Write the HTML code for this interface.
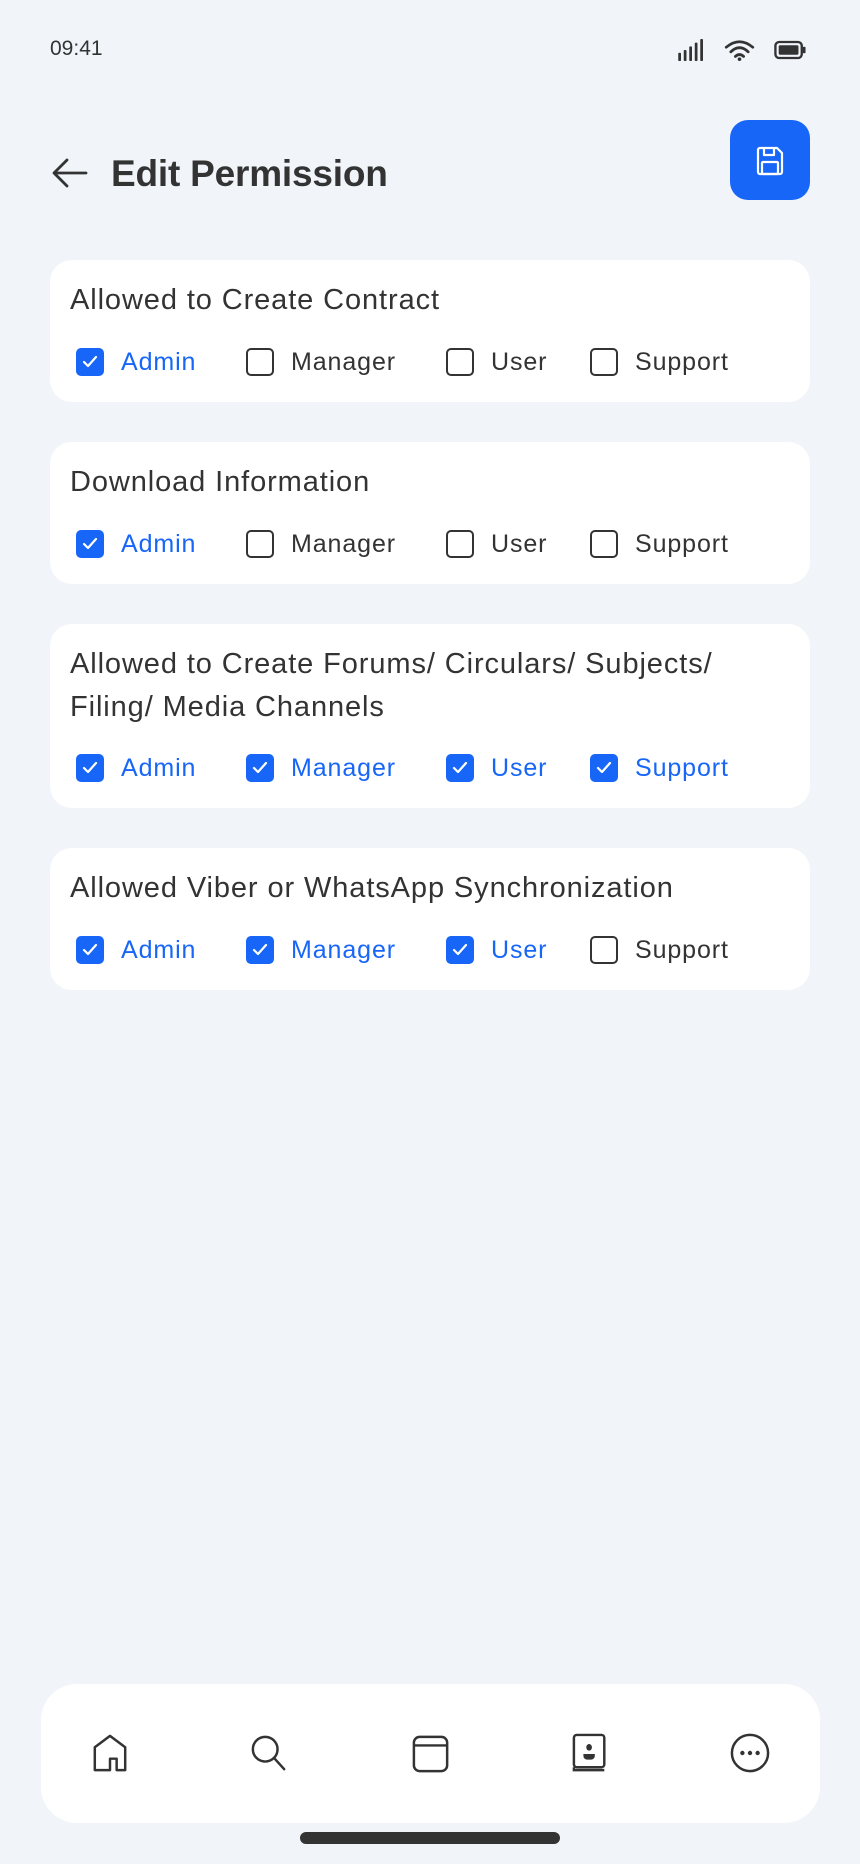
<!DOCTYPE html>
<html><head><meta charset="utf-8"><style>
*{margin:0;padding:0;box-sizing:border-box}
body{width:860px;height:1864px;background:#f1f5fa;font-family:"Liberation Sans",sans-serif;color:#333;position:relative;overflow:hidden}
.abs{position:absolute}
.time{left:50px;top:37px;font-size:21px;color:#333}
.title{left:111px;top:153px;font-size:37px;font-weight:bold;color:#333;letter-spacing:-0.2px}
.save{left:730px;top:120px;width:80px;height:80px;border-radius:18px;background:#1766f7}
.card{left:50px;width:760px;background:#fff;border-radius:22px}
.ct{position:absolute;left:20px;font-size:29px;letter-spacing:0.9px;line-height:43px;color:#333}
.cb{position:absolute;width:28px;height:28px;border-radius:5px;border:2.5px solid #333}
.cb.on{background:#1766f7;border:none}
.cb.on svg{position:absolute;left:6px;top:7px}
.lb{position:absolute;font-size:25px;letter-spacing:0.9px;line-height:28px;color:#333}
.lb.on{color:#1766f7}
.nav{left:41px;top:1684px;width:779px;height:139px;background:#fff;border-radius:36px}
.bar{left:300px;top:1832px;width:260px;height:12px;border-radius:6px;background:#333}
</style></head><body>
<div class="abs time">09:41</div>
<svg class="abs" style="left:678px;top:39px" width="28" height="22" viewBox="0 0 30 24"><g fill="#333"><rect x="0" y="15" width="3" height="9" rx="1"/><rect x="6" y="12" width="3" height="12" rx="1"/><rect x="12" y="8" width="3" height="16" rx="1"/><rect x="18" y="4" width="3" height="20" rx="1"/><rect x="24" y="0" width="3" height="24" rx="1"/></g></svg>
<svg class="abs" style="left:724px;top:39px" width="31" height="22" viewBox="0 0 33 24"><g fill="none" stroke="#333" stroke-width="3" stroke-linecap="round"><path d="M2 9 Q16.5 -3 31 9"/><path d="M7 14 Q16.5 5 26 14"/><path d="M12 19 Q16.5 15 21 19"/></g><circle cx="16.5" cy="22" r="2" fill="#333"/></svg>
<svg class="abs" style="left:774px;top:40px" width="32" height="20" viewBox="0 0 34 20"><rect x="1.5" y="1.5" width="28" height="17" rx="4" fill="none" stroke="#333" stroke-width="2.5"/><rect x="5" y="5" width="21" height="10" rx="1.5" fill="#333"/><rect x="30.5" y="6.5" width="3" height="7" rx="1" fill="#333"/></svg>

<svg class="abs" style="left:52px;top:158px" width="36" height="30" viewBox="0 0 36 30"><g fill="none" stroke="#333" stroke-width="2.8" stroke-linecap="round" stroke-linejoin="round"><path d="M34 15H3"/><path d="M15 2L2 15l13 13"/></g></svg>
<div class="abs title">Edit Permission</div>
<div class="abs save"><svg style="position:absolute;left:26px;top:26px" width="28" height="30" viewBox="0 0 28 30"><g fill="none" stroke="#fff" stroke-width="2.2" stroke-linejoin="round"><path d="M4 2h17l5 5v19a2 2 0 0 1-2 2H4a2 2 0 0 1-2-2V4a2 2 0 0 1 2-2z"/><path d="M8 2v7h10V2"/><rect x="6" y="16" width="16" height="12" rx="1"/></g></svg></div>

<div class="abs card" style="top:260px;height:142px">
<div class="ct" style="top:19px">Allowed to Create Contract</div>
<div class="cb on" style="left:26px;top:88px"><svg width="16" height="14" viewBox="0 0 16 14"><path d="M2 7l4 4 8-9" fill="none" stroke="#fff" stroke-width="2.2" stroke-linecap="round" stroke-linejoin="round"/></svg></div><div class="lb on" style="left:71px;top:88px">Admin</div>
<div class="cb" style="left:196px;top:88px"></div><div class="lb" style="left:241px;top:88px">Manager</div>
<div class="cb" style="left:396px;top:88px"></div><div class="lb" style="left:441px;top:88px">User</div>
<div class="cb" style="left:540px;top:88px"></div><div class="lb" style="left:585px;top:88px">Support</div>
</div>
<div class="abs card" style="top:442px;height:142px">
<div class="ct" style="top:19px">Download Information</div>
<div class="cb on" style="left:26px;top:88px"><svg width="16" height="14" viewBox="0 0 16 14"><path d="M2 7l4 4 8-9" fill="none" stroke="#fff" stroke-width="2.2" stroke-linecap="round" stroke-linejoin="round"/></svg></div><div class="lb on" style="left:71px;top:88px">Admin</div>
<div class="cb" style="left:196px;top:88px"></div><div class="lb" style="left:241px;top:88px">Manager</div>
<div class="cb" style="left:396px;top:88px"></div><div class="lb" style="left:441px;top:88px">User</div>
<div class="cb" style="left:540px;top:88px"></div><div class="lb" style="left:585px;top:88px">Support</div>
</div>
<div class="abs card" style="top:624px;height:184px">
<div class="ct" style="top:19px">Allowed to Create Forums/ Circulars/ Subjects/<br>Filing/ Media Channels</div>
<div class="cb on" style="left:26px;top:130px"><svg width="16" height="14" viewBox="0 0 16 14"><path d="M2 7l4 4 8-9" fill="none" stroke="#fff" stroke-width="2.2" stroke-linecap="round" stroke-linejoin="round"/></svg></div><div class="lb on" style="left:71px;top:130px">Admin</div>
<div class="cb on" style="left:196px;top:130px"><svg width="16" height="14" viewBox="0 0 16 14"><path d="M2 7l4 4 8-9" fill="none" stroke="#fff" stroke-width="2.2" stroke-linecap="round" stroke-linejoin="round"/></svg></div><div class="lb on" style="left:241px;top:130px">Manager</div>
<div class="cb on" style="left:396px;top:130px"><svg width="16" height="14" viewBox="0 0 16 14"><path d="M2 7l4 4 8-9" fill="none" stroke="#fff" stroke-width="2.2" stroke-linecap="round" stroke-linejoin="round"/></svg></div><div class="lb on" style="left:441px;top:130px">User</div>
<div class="cb on" style="left:540px;top:130px"><svg width="16" height="14" viewBox="0 0 16 14"><path d="M2 7l4 4 8-9" fill="none" stroke="#fff" stroke-width="2.2" stroke-linecap="round" stroke-linejoin="round"/></svg></div><div class="lb on" style="left:585px;top:130px">Support</div>
</div>
<div class="abs card" style="top:848px;height:142px">
<div class="ct" style="top:19px">Allowed Viber or WhatsApp Synchronization</div>
<div class="cb on" style="left:26px;top:88px"><svg width="16" height="14" viewBox="0 0 16 14"><path d="M2 7l4 4 8-9" fill="none" stroke="#fff" stroke-width="2.2" stroke-linecap="round" stroke-linejoin="round"/></svg></div><div class="lb on" style="left:71px;top:88px">Admin</div>
<div class="cb on" style="left:196px;top:88px"><svg width="16" height="14" viewBox="0 0 16 14"><path d="M2 7l4 4 8-9" fill="none" stroke="#fff" stroke-width="2.2" stroke-linecap="round" stroke-linejoin="round"/></svg></div><div class="lb on" style="left:241px;top:88px">Manager</div>
<div class="cb on" style="left:396px;top:88px"><svg width="16" height="14" viewBox="0 0 16 14"><path d="M2 7l4 4 8-9" fill="none" stroke="#fff" stroke-width="2.2" stroke-linecap="round" stroke-linejoin="round"/></svg></div><div class="lb on" style="left:441px;top:88px">User</div>
<div class="cb" style="left:540px;top:88px"></div><div class="lb" style="left:585px;top:88px">Support</div>
</div>

<div class="abs nav"></div>
<svg class="abs" style="left:91px;top:1734px" width="38" height="38" viewBox="0 0 40 40"><path d="M4 38V14L20 2l16 12v24h-9V26h-7v12z" fill="none" stroke="#333" stroke-width="2.6" stroke-linejoin="round"/></svg>
<svg class="abs" style="left:250px;top:1734px" width="38" height="38" viewBox="0 0 40 40"><g fill="none" stroke="#333" stroke-width="2.6" stroke-linecap="round"><circle cx="16" cy="16" r="13"/><path d="M26 26l10 11"/></g></svg>
<svg class="abs" style="left:412px;top:1735px" width="38" height="38" viewBox="0 0 40 40"><g fill="none" stroke="#333" stroke-width="2.6"><rect x="2" y="2" width="35" height="36" rx="6"/><path d="M2 11h35"/></g></svg>
<svg class="abs" style="left:572px;top:1733px" width="38" height="40" viewBox="0 0 40 42"><g fill="none" stroke="#333" stroke-width="2.6"><rect x="2" y="2" width="32" height="34" rx="3"/><path d="M2 36v3h32"/></g><ellipse cx="18" cy="15" rx="3" ry="3.5" fill="#333"/><path d="M12 22h12v2a4 4 0 0 1-4 4h-4a4 4 0 0 1-4-4z" fill="#333"/></svg>
<svg class="abs" style="left:730px;top:1733px" width="40" height="40" viewBox="0 0 42 42"><circle cx="21" cy="21" r="19" fill="none" stroke="#333" stroke-width="2.6"/><g fill="#333"><circle cx="13" cy="21" r="2.3"/><circle cx="21" cy="21" r="2.3"/><circle cx="29" cy="21" r="2.3"/></g></svg>
<div class="abs bar"></div>
</body></html>
